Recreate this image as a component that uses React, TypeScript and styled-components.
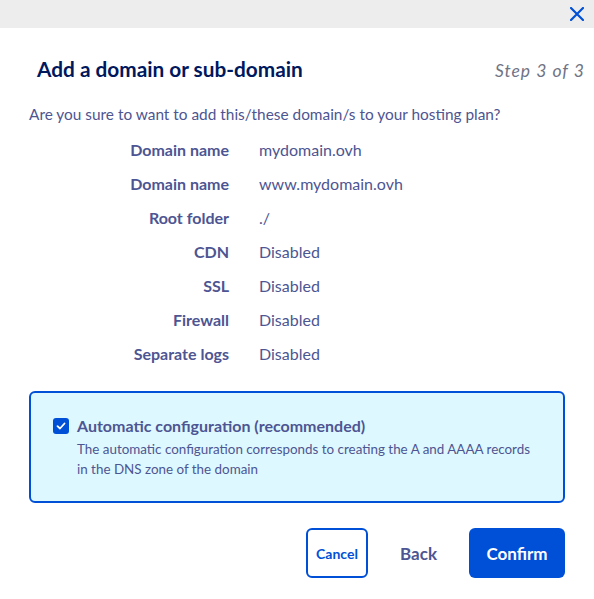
import React from "react";
import styled, { createGlobalStyle } from "styled-components";

const Global = createGlobalStyle`
  html, body { margin: 0; padding: 0; background: #ffffff; }
  body { font-family: "Source Sans Pro", Lato, "Noto Sans", sans-serif; }
  * { box-sizing: border-box; }
`;

const Page = styled.div`
  width: 594px;
  height: 599px;
  background: #fff;
  display: flex;
  flex-direction: column;
`;

const TopBar = styled.div`
  height: 28px;
  background: #ecedec;
  display: flex;
  justify-content: flex-end;
  align-items: center;
  padding-right: 9px;
`;

const CloseButton = styled.button`
  border: none;
  background: transparent;
  padding: 0;
  width: 16px;
  height: 16px;
  display: flex;
  align-items: center;
  justify-content: center;
  cursor: pointer;
`;

const Body = styled.div`
  padding: 0 29px 0 29px;
  display: flex;
  flex-direction: column;
`;

const Header = styled.div`
  display: flex;
  justify-content: space-between;
  align-items: baseline;
  padding: 27px 9px 0 8px;
  margin-right: -29px;
`;

const Title = styled.h2`
  margin: 0;
  font-size: 20.8px;
  font-weight: 700;
  line-height: 28px;
  color: #00185e;
`;

const Step = styled.span`
  font-size: 17.5px;
  font-style: italic;
  letter-spacing: 1px;
  color: #707385;
`;

const Question = styled.p`
  margin: 19px 0 0 0;
  font-size: 15.4px;
  line-height: 24px;
  color: #4d5592;
`;

const DefList = styled.dl`
  margin: 12px 0 0 0;
  display: grid;
  grid-template-columns: 200px 1fr;
  column-gap: 30px;
  row-gap: 10px;
`;

const Term = styled.dt`
  margin: 0;
  text-align: right;
  font-size: 16px;
  line-height: 24px;
  font-weight: 700;
  color: #4d5592;
`;

const Desc = styled.dd`
  margin: 0;
  font-size: 16px;
  line-height: 24px;
  color: #4d5592;
`;

const OptionBox = styled.label`
  margin-top: 25px;
  width: 536px;
  border: 2px solid #0050d7;
  border-radius: 6px;
  background: #def8ff;
  padding: 21px 22px 22px 22px;
  display: flex;
  gap: 8px;
  align-items: flex-start;
`;

const CheckMark = styled.span`
  flex: none;
  width: 16px;
  height: 16px;
  margin-top: 4px;
  border-radius: 3px;
  background: #0050d7;
  display: flex;
  align-items: center;
  justify-content: center;
`;

const OptionText = styled.div`
  display: flex;
  flex-direction: column;
`;

const OptionTitle = styled.span`
  font-size: 16px;
  line-height: 24px;
  font-weight: 700;
  color: #4d5592;
  margin-bottom: 1px;
`;

const OptionDesc = styled.span`
  font-size: 13.4px;
  line-height: 20px;
  color: #4d5592;
`;

const Actions = styled.div`
  margin-top: 25px;
  display: flex;
  justify-content: flex-end;
  gap: 16px;
`;

const Button = styled.button<{ $variant: "outline" | "ghost" | "primary" }>`
  height: 50px;
  border-radius: 6px;
  font-family: inherit;
  font-weight: 700;
  cursor: pointer;
  display: flex;
  align-items: center;
  justify-content: center;
  ${({ $variant }) =>
    $variant === "outline"
      ? `
    width: 62px;
    border: 2px solid #0050d7;
    background: #fff;
    color: #0050d7;
    font-size: 14px;
    padding: 0;
  `
      : $variant === "ghost"
      ? `
    border: none;
    background: transparent;
    color: #4d5592;
    font-size: 17px;
    padding: 0 16px;
  `
      : `
    width: 96px;
    border: none;
    background: #0050d7;
    color: #fff;
    font-size: 17px;
    padding: 0;
  `}
`;

const rows: [string, string][] = [
  ["Domain name", "mydomain.ovh"],
  ["Domain name", "www.mydomain.ovh"],
  ["Root folder", "./"],
  ["CDN", "Disabled"],
  ["SSL", "Disabled"],
  ["Firewall", "Disabled"],
  ["Separate logs", "Disabled"],
];

export default function App() {
  return (
    <Page>
      <Global />
      <TopBar>
        <CloseButton aria-label="Close">
          <svg width="14" height="14" viewBox="0 0 14 14">
            <path d="M1 1 L13 13 M13 1 L1 13" stroke="#0050d7" strokeWidth="2.2" strokeLinecap="round" />
          </svg>
        </CloseButton>
      </TopBar>
      <Body>
        <Header>
          <Title>Add a domain or sub-domain</Title>
          <Step>Step 3 of 3</Step>
        </Header>
        <Question>Are you sure to want to add this/these domain/s to your hosting plan?</Question>
        <DefList>
          {rows.map(([k, v], i) => (
            <React.Fragment key={i}>
              <Term>{k}</Term>
              <Desc>{v}</Desc>
            </React.Fragment>
          ))}
        </DefList>
        <OptionBox>
          <CheckMark>
            <svg width="10" height="10" viewBox="0 0 10 10">
              <path d="M1.5 5.2 L4 7.5 L8.5 2.5" stroke="#fff" strokeWidth="1.8" fill="none" strokeLinecap="round" strokeLinejoin="round" />
            </svg>
          </CheckMark>
          <OptionText>
            <OptionTitle>Automatic configuration (recommended)</OptionTitle>
            <OptionDesc>
              The automatic configuration corresponds to creating the A and AAAA records in the DNS zone of the domain
            </OptionDesc>
          </OptionText>
        </OptionBox>
        <Actions>
          <Button $variant="outline">Cancel</Button>
          <Button $variant="ghost">Back</Button>
          <Button $variant="primary">Confirm</Button>
        </Actions>
      </Body>
    </Page>
  );
}
